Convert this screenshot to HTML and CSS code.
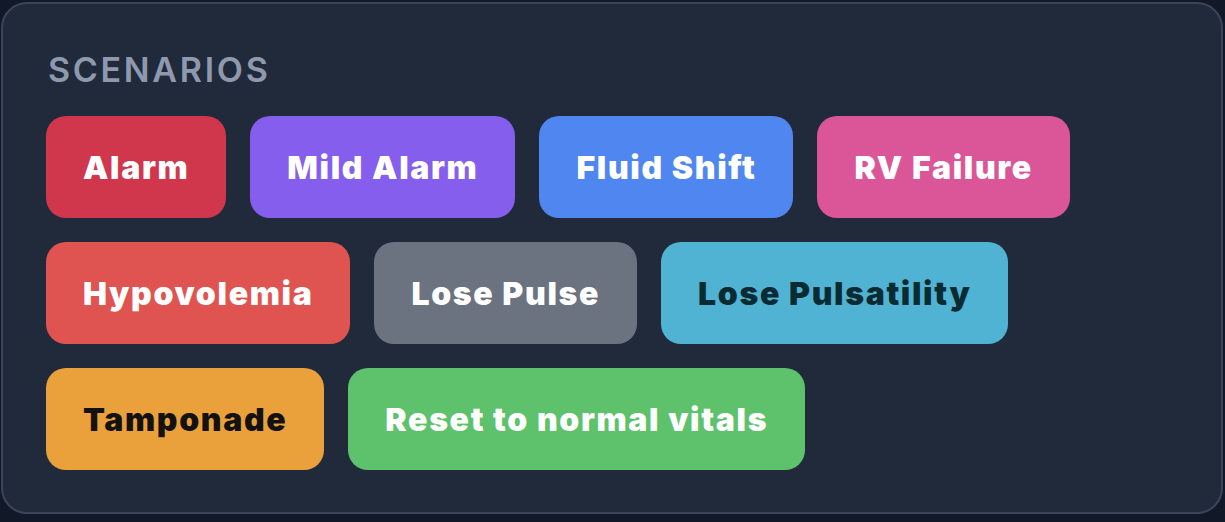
FILE: index.html
```html
<!DOCTYPE html>
<html lang="en">
<head>
<meta charset="utf-8">
<title>Scenarios</title>
<link rel="stylesheet" href="styles.css">
</head>
<body>
<section class="card">
  <h2 class="title">SCENARIOS</h2>
  <div class="buttons">
    <button class="btn btn-alarm">Alarm</button>
    <button class="btn btn-mild">Mild Alarm</button>
    <button class="btn btn-fluid">Fluid Shift</button>
    <button class="btn btn-rv">RV Failure</button>
    <button class="btn btn-hypo">Hypovolemia</button>
    <button class="btn btn-pulse">Lose Pulse</button>
    <button class="btn btn-pulsatility">Lose Pulsatility</button>
    <button class="btn btn-tamponade">Tamponade</button>
    <button class="btn btn-reset">Reset to normal vitals</button>
  </div>
</section>
</body>
</html>
```
FILE: styles.css
```css
* { box-sizing: border-box; }
html, body { margin: 0; padding: 0; }
body {
  background: #111827;
  padding: 2px 2px 6px 1px;
  font-family: Inter, "Noto Sans", sans-serif;
}
.card {
  background: #212a3b;
  border: 2px solid #3b4558;
  border-radius: 26px;
  padding: 49px 42px 42px 43px;
}
.title {
  margin: 0 0 29px 2px;
  font-size: 34px;
  line-height: 34px;
  font-weight: 600;
  letter-spacing: 2.7px;
  color: #8e99ad;
}
.buttons {
  display: flex;
  flex-wrap: wrap;
  gap: 24px;
  max-width: 1080px;
}
.btn {
  height: 102px;
  border: 0;
  border-radius: 20px;
  padding: 0 37px;
  font-family: Inter, "Noto Sans", sans-serif;
  font-size: 32px;
  font-weight: 900;
  letter-spacing: 1.65px;
  color: #ffffff;
  display: flex;
  align-items: center;
  justify-content: center;
}
.btn-alarm { background: #d0374d; }
.btn-mild { background: #855eee; }
.btn-fluid { background: #4f86ef; }
.btn-rv { background: #db5698; }
.btn-hypo { background: #df5450; }
.btn-pulse { background: #6b7280; }
.btn-pulsatility { background: #50b3d4; color: #0b2b33; }
.btn-tamponade { background: #eaa13b; color: #141210; }
.btn-reset { background: #5dc26b; }
```
